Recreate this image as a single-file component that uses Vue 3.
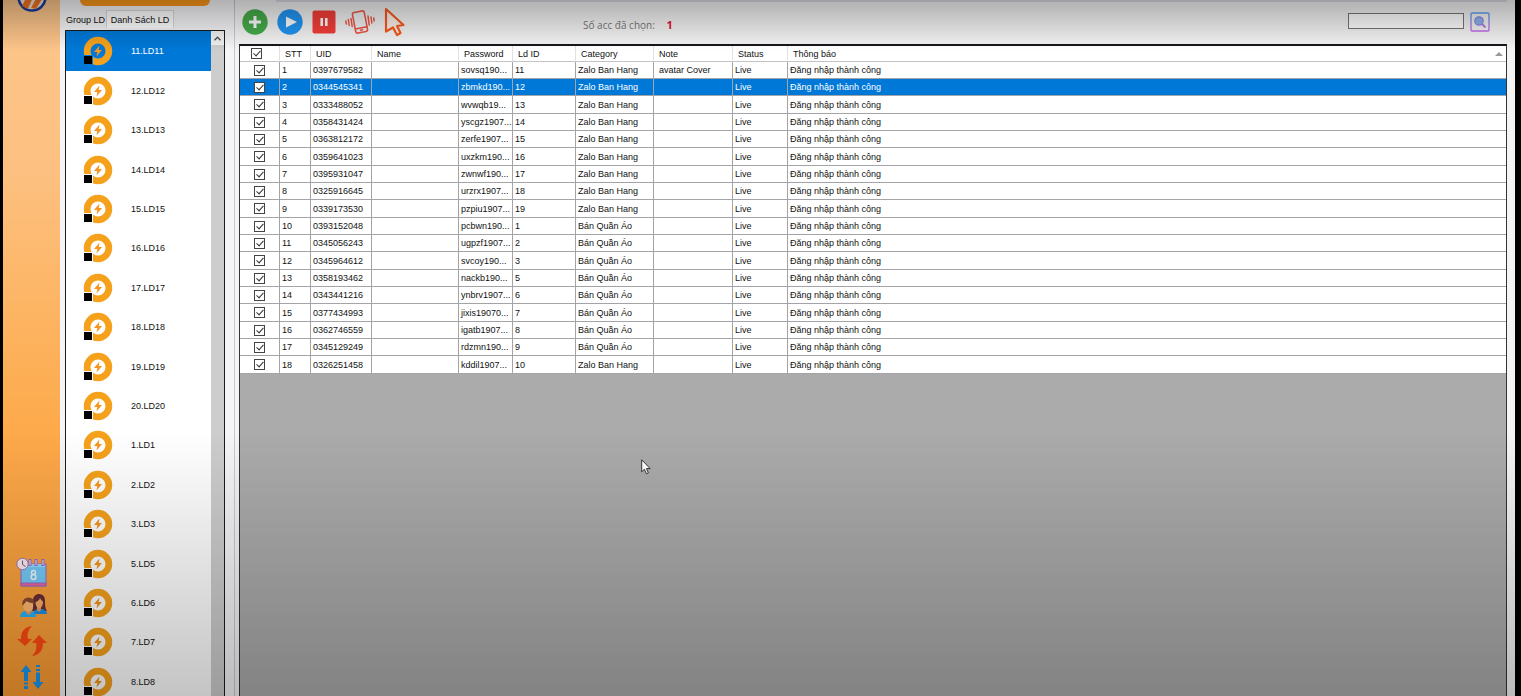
<script setup>
import { ref } from 'vue'

const devices = ref([11, 12, 13, 14, 15, 16, 17, 18, 19, 20, 1, 2, 3, 5, 6, 7, 8].map((n) => `${n}.LD${n}`))
const selectedDevice = ref('11.LD11')
const selectedRow = ref(2)
const allChecked = ref(true)
const keyword = ref('')

const columns = ['STT', 'UID', 'Name', 'Password', 'Ld ID', 'Category', 'Note', 'Status', 'Thông báo']

const source = [
  ['0397679582', 'sovsq190...', '11'],
  ['0344545341', 'zbmkd190...', '12'],
  ['0333488052', 'wvwqb19...', '13'],
  ['0358431424', 'yscgz1907...', '14'],
  ['0363812172', 'zerfe1907...', '15'],
  ['0359641023', 'uxzkm190...', '16'],
  ['0395931047', 'zwnwf190...', '17'],
  ['0325916645', 'urzrx1907...', '18'],
  ['0339173530', 'pzpiu1907...', '19'],
  ['0393152048', 'pcbwn190...', '1'],
  ['0345056243', 'ugpzf1907...', '2'],
  ['0345964612', 'svcoy190...', '3'],
  ['0358193462', 'nackb190...', '5'],
  ['0343441216', 'ynbrv1907...', '6'],
  ['0377434993', 'jixis19070...', '7'],
  ['0362746559', 'igatb1907...', '8'],
  ['0345129249', 'rdzmn190...', '9'],
  ['0326251458', 'kddil1907...', '10'],
]

const rows = ref(
  source.map(([uid, password, ld], i) => ({
    stt: i + 1,
    uid,
    password,
    ld,
    category: i < 9 || i === 17 ? 'Zalo Ban Hang' : 'Bán Quần Áo',
    note: i === 0 ? 'avatar Cover' : '',
    checked: true,
  }))
)

function toggleAll() {
  rows.value.forEach((r) => { r.checked = allChecked.value })
}
</script>

<template>
  <div class="app">
    <nav class="rail">
      <a class="logo" href="#" aria-label="Home">
        <svg width="32" height="32" viewBox="0 0 32 32">
          <circle cx="16" cy="16" r="13.5" fill="#f6e3d3" stroke="#1d3c9a" stroke-width="2.6" />
          <path d="M6 25L12 13l6 1-6 14zM15 27l8-15 5 3-8 13z" fill="#f0731f" />
        </svg>
      </a>
      <div class="rail-tools">
        <button aria-label="Schedule">
          <svg width="32" height="30" viewBox="0 0 32 30">
            <path d="M5 7h25v22H5z" fill="#74ccfa" stroke="#9a6cc8" />
            <path d="M5 26h25v3H5z" fill="#f0649b" stroke="#9a6cc8" />
            <path d="M6 7h23v3H6z" fill="#98dcff" />
            <path d="M14 9V2M20 9V2M27 9V2" stroke="#9a6cc8" stroke-width="3" />
            <path d="M14 8V3M20 8V3M27 8V3" stroke="#f5e6ee" />
            <ellipse cx="17.500" cy="15.500" rx="2" ry="2" fill="none" stroke="#f0faff" stroke-width="1.400" />
            <ellipse cx="17.500" cy="20" rx="2.400" ry="2.500" fill="none" stroke="#f0faff" stroke-width="1.400" />
            <circle cx="6.500" cy="7" r="5.700" fill="#fdeef0" stroke="#a078be" />
            <path d="M6.500 3.500v4l3 2" fill="none" stroke="#74527f" />
          </svg>
        </button>
        <button class="people" aria-label="Accounts">
          <svg width="28" height="24" viewBox="0 0 28 24">
            <path d="M13 17c2-3 0-6 1-10 0-5 3-7 6-7 4 0 6 3 6 7s0 7 2 10z" fill="#6a2d38" />
            <path d="M14 20c0-3 3-5 5-5h3c3 0 6 2 6 5z" fill="#1c90e6" />
            <path d="M18 11h4v5l-2 2-2-2z" fill="#f09a52" />
            <path d="M16.500 8c2-.5 4-2 4.500-4 1 2 2 3 3 3.500 0 4-1.500 6.500-3.700 6.500S16.500 12 16.500 8z" fill="#fbae64" />
            <path d="M1 23c0-4 3-6 6-6h4c4 0 6 3 6 6z" fill="#2ab2f6" />
            <path d="M7 15h5v4l-2.500 2L7 19z" fill="#f09a52" />
            <ellipse cx="9.200" cy="12" rx="5" ry="6" fill="#ffb96f" />
            <path d="M3.500 12c-1-5 2-8.500 6-8.500s7 3.500 5.500 8.500c-.5-1-.8-2-1-3-2 0-5-.5-6.500-2-1 2-3 3-4 5z" fill="#8c4a30" />
          </svg>
        </button>
        <button aria-label="Reload">
          <svg width="30" height="32" viewBox="0 0 30 32">
            <path d="M15 1C7 2 4 7 4 14H0l8 7 7-7h-4c-1-5 0-9 4-13z" fill="#ff4a10" />
            <path d="M15 31c8-1 11-6 11-13h4l-8-8-7 8h4c1 5 0 9-4 13z" fill="#ff4a10" />
          </svg>
        </button>
        <button aria-label="Transfer">
          <svg width="24" height="26" viewBox="0 0 24 26">
            <path d="M6 1l5.500 7H8v9H4V8H.5z" fill="#1a96f2" />
            <path d="M4 18.500h4v2H4zM4 22h4v3H4zM16 1h4v2h-4zM16 5h4v2h-4z" fill="#1a96f2" />
            <path d="M18 25l-5.500-7H16V8.500h4V18h3.500z" fill="#1a96f2" />
          </svg>
        </button>
      </div>
    </nav>

    <aside class="devices">
      <button class="action" aria-label="Action"></button>
      <div class="tabs" role="tablist">
        <button class="tab" role="tab">Group LD</button>
        <button class="tab active" role="tab">Danh Sách LD</button>
      </div>
      <div class="list-box">
        <ul class="list">
          <li
            v-for="d in devices"
            :key="d"
            :class="{ selected: d === selectedDevice }"
            @click="selectedDevice = d"
          >
            <svg width="30" height="30" viewBox="0 0 30 30">
              <circle cx="15" cy="15" r="10.900" fill="none" stroke="#f5a11c" stroke-width="6.700" />
              <path class="hole" d="M0 19h10v11H0z" />
              <path d="M1 20h8v8H1z" fill="#000" />
              <path d="M16.500 9.500l-5.500 6.500h3.300l-.8 4.500 5.500-6.500h-3.300z" fill="#f5951c" />
            </svg>
            <span>{{ d }}</span>
          </li>
        </ul>
        <div class="scroll">
          <button aria-label="Scroll up">
            <svg width="7" height="5" viewBox="0 0 7 5"><path d="M.5 4.200l3-3 3 3" fill="none" stroke="#505050" stroke-width="1.400" /></svg>
          </button>
        </div>
      </div>
    </aside>

    <main class="work">
      <header class="toolbar">
        <div class="tools">
          <button aria-label="Add">
            <svg width="26" height="26" viewBox="0 0 26 26">
              <circle cx="13" cy="13" r="12.700" fill="#46ac4b" />
              <path d="M13 7v12M7 13h12" stroke="#fff" stroke-width="3" />
            </svg>
          </button>
          <button aria-label="Start">
            <svg width="26" height="26" viewBox="0 0 26 26">
              <circle cx="13" cy="13" r="12.700" fill="#2296f3" />
              <path d="M9 7.500l11 5.500-11 5.500z" fill="#fff" />
            </svg>
          </button>
          <button aria-label="Pause">
            <svg width="24" height="24" viewBox="0 0 24 24">
              <rect x="0.500" y="0.500" width="23" height="23" rx="2" fill="#f53e38" />
              <path d="M9.700 8v8M14.300 8v8" stroke="#fff" stroke-width="2.600" />
            </svg>
          </button>
          <button aria-label="Shake">
            <svg width="30" height="26" viewBox="0 0 30 26" fill="none" stroke="#ee5544" stroke-width="1.500" stroke-linecap="round">
              <g transform="rotate(-11 15 13)">
                <rect x="9" y="2.500" width="12" height="21" rx="2" />
                <path d="M9 19h12M14 21.200h2" />
              </g>
              <path d="M6 9.500l1.200 8M3.300 10.500l.9 6M.9 12l.4 3M23 7l1.200 9M26 8l.8 6M28.800 9l.3 3" />
            </svg>
          </button>
          <button aria-label="Select">
            <svg width="22" height="30" viewBox="0 0 22 30">
              <path d="M2 2l17.500 16-6.500 1 3.500 7-3.500 2-4-7.500-7 4z" fill="#fff3ea" stroke="#fa5a1e" stroke-width="2.200" stroke-linejoin="round" />
            </svg>
          </button>
        </div>
        <p class="count">Số acc đã chọn: <strong>1</strong></p>
        <form class="search" @submit.prevent>
          <input v-model="keyword" type="text" aria-label="Search" />
          <button aria-label="Find">
            <svg width="20" height="20" viewBox="0 0 20 20" fill="none">
              <defs>
                <linearGradient id="lens" x1="0" y1="0" x2="0" y2="1">
                  <stop offset="0" stop-color="#5b9df0" />
                  <stop offset="1" stop-color="#c868ee" />
                </linearGradient>
              </defs>
              <rect x="1" y="1" width="18" height="18" rx="1" stroke="url(#lens)" stroke-width="1.300" />
              <circle cx="9" cy="9" r="4.200" fill="#8fb4ec" stroke="#8a8ce8" stroke-width="1.300" />
              <path d="M12 12l3.500 3.500" stroke="#b878e6" stroke-width="2" />
            </svg>
          </button>
        </form>
      </header>

      <section class="grid">
        <table>
          <colgroup>
            <col class="c-check" /><col class="c-stt" /><col class="c-uid" /><col class="c-name" /><col class="c-pass" />
            <col class="c-ld" /><col class="c-cat" /><col class="c-note" /><col class="c-status" /><col />
          </colgroup>
          <thead>
            <tr>
              <th class="check"><input v-model="allChecked" type="checkbox" aria-label="Select all" @change="toggleAll" /></th>
              <th v-for="c in columns" :key="c">{{ c }}</th>
            </tr>
          </thead>
          <tbody>
            <tr v-for="r in rows" :key="r.uid" :class="{ selected: r.stt === selectedRow }" @click="selectedRow = r.stt">
              <td class="check"><input v-model="r.checked" type="checkbox" :aria-label="`Select ${r.uid}`" /></td>
              <td>{{ r.stt }}</td>
              <td>{{ r.uid }}</td>
              <td></td>
              <td>{{ r.password }}</td>
              <td>{{ r.ld }}</td>
              <td>{{ r.category }}</td>
              <td class="note">{{ r.note }}</td>
              <td>Live</td>
              <td>Đăng nhập thành công</td>
            </tr>
          </tbody>
        </table>
        <span class="sort"></span>
      </section>
    </main>

    <svg class="pointer" width="10" height="16" viewBox="0 0 10 16">
      <path d="M.7.800v12l2.700-2.500 2 4.500 2-.9-2-4.300h3.800z" fill="#fff" stroke="#222" stroke-width=".9" />
    </svg>
    <div class="shade"></div>
  </div>
</template>

<style>
body {
  background: #000;
}
</style>

<style scoped>
* {
  box-sizing: border-box;
}

.app {
  display: flex;
  height: 100vh;
  padding: 0 6px 0 3px;
  overflow: hidden;
  background: #000;
  color: #111;
  font: 9px/12px "Liberation Sans", Arial, sans-serif;
}

button {
  margin: 0;
  padding: 0;
  border: 0;
  background: none;
  color: inherit;
  font: inherit;
}

svg {
  display: block;
}

.rail {
  display: flex;
  flex: none;
  flex-direction: column;
  align-items: center;
  justify-content: space-between;
  width: 57px;
  background: linear-gradient(#fdc68c, #fdc080 25%, #fdab4d 60%, #fb9c33);
}

.logo {
  margin-top: -19px;
}

.rail-tools {
  display: flex;
  flex-direction: column;
  align-items: center;
  gap: 7px;
  padding-bottom: 6px;
}

.people {
  padding-left: 2px;
}

.devices {
  display: flex;
  flex: none;
  flex-direction: column;
  width: 175px;
  padding: 0 9px 0 5px;
  border-right: 1px solid #c9c9cc;
  background: #f5f4f7;
}

.action {
  flex: none;
  width: 130px;
  height: 6px;
  margin-left: 15px;
  border-radius: 0 0 6px 6px;
  background: #fb981a;
}

.tabs {
  display: flex;
  flex: none;
  align-items: flex-end;
  height: 22px;
}

.tab {
  width: 41px;
  height: 16px;
  white-space: nowrap;
}

.tab.active {
  width: 68px;
  height: 18px;
  border: 1px solid #d9d9d9;
  border-bottom: 0;
  background: #fff;
}

.list-box {
  display: flex;
  flex: 1;
  min-height: 0;
  margin-top: 2px;
  border: 1px solid #1c1c1c;
  border-bottom: 0;
  background: #fff;
}

.list {
  flex: 1;
  margin: 0;
  padding: 0;
  overflow: hidden;
  list-style: none;
}

.list li {
  display: flex;
  align-items: center;
  gap: 18px;
  height: 39px;
  padding-left: 17px;
}

.list li:nth-child(5n + 1),
.list li:nth-child(5n + 3) {
  height: 40px;
}

.list li.selected {
  background: #0078d7;
  color: #fff;
}

.hole {
  fill: #fff;
}

.selected .hole {
  fill: #0078d7;
}

.scroll {
  width: 13px;
  background: #cdcdcd;
}

.scroll button {
  display: grid;
  width: 100%;
  height: 14px;
  place-items: center;
  background: #f0f0f0;
}

.work {
  display: flex;
  flex: 1;
  flex-direction: column;
  min-width: 0;
  padding: 0 8px 0 4px;
  background: #f5f4f5;
}

.toolbar {
  display: flex;
  flex: none;
  align-items: center;
  height: 44px;
  background: linear-gradient(#dadae4, #dadae4) 37px 0 / 100% 2px no-repeat;
}

.tools {
  display: flex;
  flex: none;
  align-items: center;
  gap: 9px;
  width: 344px;
  padding-left: 3px;
}

.count {
  flex: 1;
  margin: 0;
  padding-top: 5px;
  color: #777;
  font: 10px/16px "Open Sans", "Noto Sans", sans-serif;
}

.count strong {
  margin-left: 9px;
  color: #e8112d;
  font-size: 11px;
}

.search {
  display: flex;
  flex: none;
  align-items: center;
  gap: 6px;
  padding-right: 17px;
}

.search input {
  width: 116px;
  height: 16px;
  padding: 0 3px;
  border: 1px solid #777;
  background: #fff;
  font: inherit;
}

.search,
.search input {
  margin-top: -1px;
}

.grid {
  position: relative;
  flex: 1;
  min-height: 0;
  border: 1px solid #333;
  border-top: 2px solid #16161c;
  border-bottom: 0;
  background: #ababab;
}

table {
  width: 100%;
  border-spacing: 0;
  table-layout: fixed;
  background: #fff;
}

.c-check { width: 40px; }
.c-stt { width: 31px; }
.c-uid { width: 61px; }
.c-name { width: 87px; }
.c-pass { width: 54px; }
.c-ld { width: 63px; }
.c-cat { width: 78px; }
.c-note { width: 79px; }
.c-status { width: 55px; }

th,
td {
  height: 17px;
  padding: 0 0 0 2px;
  overflow: hidden;
  border-right: 1px solid #a3a3a8;
  border-bottom: 1px solid #a3a3a8;
  text-align: left;
  vertical-align: middle;
  white-space: nowrap;
}

th {
  height: 16px;
  padding-left: 5px;
  border-right-color: #e2e2e4;
  border-bottom-color: #c4c4c8;
  font-weight: normal;
}

th:last-child,
td:last-child {
  border-right: 0;
}

tbody tr:nth-child(3n) td {
  height: 18px;
}

td.note {
  padding-left: 5px;
}

tr.selected td {
  background: #0078d7;
  color: #fff;
}

.check {
  padding: 0;
  text-align: center;
}

th.check {
  padding-right: 7px;
}

.check input {
  position: relative;
  display: block;
  width: 11px;
  height: 11px;
  margin: 0 auto;
  border: 1px solid #444;
  background: #fff;
  appearance: none;
}

.check input:checked::before {
  position: absolute;
  top: 0;
  left: 3px;
  width: 3px;
  height: 6px;
  border: solid #333;
  border-width: 0 1px 1px 0;
  content: "";
  transform: rotate(42deg);
}

.sort {
  position: absolute;
  top: 6px;
  right: 3px;
  border: 4px solid transparent;
  border-top: 0;
  border-bottom: 4px solid #999;
}

.pointer {
  position: fixed;
  top: 459px;
  left: 641px;
}

.shade {
  position: fixed;
  inset: 0;
  background: linear-gradient(rgba(0, 0, 0, 0.28), rgba(0, 0, 0, 0) 50px, rgba(0, 0, 0, 0) 62%, rgba(0, 0, 0, 0.23));
  pointer-events: none;
}
</style>
